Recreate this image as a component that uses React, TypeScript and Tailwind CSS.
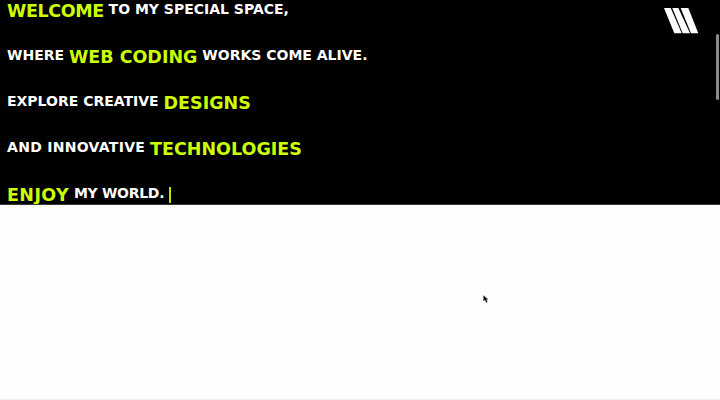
const Hi = ({ children, className = "" }: { children: string; className?: string }) => (
  <span className={`align-[-3px] text-[17.5px] leading-none text-[#ccff00] ${className}`}>{children}</span>
);

export default function App() {
  return (
    <div className="relative h-[400px] w-[720px] overflow-hidden border-b border-[#f1f1f3] bg-[#fefefe] font-['DejaVu_Sans',sans-serif]">
      {/* Hero panel */}
      <div className="relative h-[205px] overflow-hidden border-b border-[#3a3a3a] bg-black">
        <div className="-mt-[14px] pl-[7px] text-[14px] font-bold leading-[46px] text-white">
          <p className="h-[46px] whitespace-pre">
            <Hi className="tracking-[-0.4px]">WELCOME</Hi> TO MY SPECIAL SPACE,
          </p>
          <p className="h-[46px] whitespace-pre">
            WHERE <Hi>WEB CODING</Hi> WORKS COME ALIVE.
          </p>
          <p className="h-[46px] whitespace-pre">
            EXPLORE CREATIVE <Hi>DESIGNS</Hi>
          </p>
          <p className="h-[46px] whitespace-pre">
            <span className="tracking-[0.3px]">AND INNOVATIVE</span> <Hi>TECHNOLOGIES</Hi>
          </p>
          <p className="h-[46px] whitespace-pre">
            <Hi className="tracking-[0.4px]">ENJOY</Hi> <span className="tracking-[-0.3px]">MY WORLD.</span>
            <span className="ml-[5px] inline-block h-[16px] w-[2px] align-[-5px] bg-[#b8e600]" />
          </p>
        </div>

        {/* Logo */}
        <svg className="absolute left-[660px] top-[4px]" width="42" height="32" viewBox="0 0 42 32">
          <polygon points="4,4 10.7,4 21.7,29.3 14.3,29.3" fill="#fff" />
          <polygon points="12.3,4 18.3,4 30,29.3 22.7,29.3" fill="#fff" />
          <polygon points="20.7,4 28.3,4 38.3,29.3 31,29.3" fill="#fff" />
        </svg>

        {/* Scrollbar thumb */}
        <div className="absolute left-[716px] top-[34px] h-[66px] w-[3px] rounded-full bg-[#8c8c8c]" />
      </div>

      {/* Mouse pointer */}
      <svg className="absolute left-[483px] top-[295px]" width="6" height="8" viewBox="0 0 6 8">
        <path d="M0.5 0.5 L0.5 6 L2 4.8 L3.2 7.5 L4.4 7 L3.2 4.5 L5 4.5 Z" fill="#000" stroke="#555" strokeWidth="0.3" />
      </svg>
    </div>
  );
}
